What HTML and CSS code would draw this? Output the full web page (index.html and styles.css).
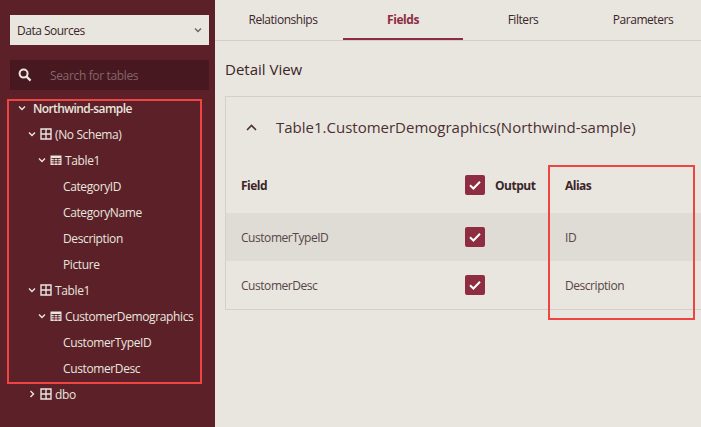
FILE: index.html
```html
<!DOCTYPE html>
<html lang="en">
<head>
<meta charset="utf-8">
<title>Detail View</title>
<link rel="stylesheet" href="styles.css">
</head>
<body>
<svg class="defs" width="0" height="0">
  <defs>
    <symbol id="schema" viewBox="0 0 12 12"><path d="M1 1h10v10H1zM6 1v10M1 6h10" fill="none" stroke="currentColor" stroke-width="1.4"/></symbol>
    <symbol id="table" viewBox="0 0 12 12"><path d="M0.5 1.5h11v9.5h-11z" fill="currentColor"/><path d="M1.5 4.5h9M1.5 6.7h9M1.5 8.9h9M4.2 4v6.5M7.8 4v6.5" stroke="#5c2029" stroke-width="0.9" fill="none"/></symbol>
    <symbol id="down" viewBox="0 0 8 8"><path d="M1 2.5l3 3 3-3" fill="none" stroke="currentColor" stroke-width="1.4"/></symbol>
    <symbol id="right" viewBox="0 0 8 8"><path d="M2.5 1l3 3-3 3" fill="none" stroke="currentColor" stroke-width="1.4"/></symbol>
    <symbol id="check" viewBox="0 0 20 20"><path d="M5 10.3l3.4 3.2 6.6-6.8" fill="none" stroke="#fff" stroke-width="2"/></symbol>
  </defs>
</svg>
<div class="app">
  <aside class="sidebar">
    <div class="select">
      <span>Data Sources</span>
      <svg class="select-caret" width="8" height="8"><use href="#down"/></svg>
    </div>
    <div class="search">
      <svg class="search-icon" width="14" height="14" viewBox="0 0 14 14"><circle cx="5.6" cy="5.6" r="4" fill="none" stroke="currentColor" stroke-width="2"/><path d="M8.6 8.6l4 4" stroke="currentColor" stroke-width="2.2"/></svg>
      <span>Search for tables</span>
    </div>
    <ul class="tree">
      <li class="node level-0 strong"><svg class="caret" width="8" height="8"><use href="#down"/></svg>Northwind-sample</li>
      <li class="node level-1"><svg class="caret" width="8" height="8"><use href="#down"/></svg><svg class="glyph" width="12" height="12"><use href="#schema"/></svg>(No Schema)</li>
      <li class="node level-2"><svg class="caret" width="8" height="8"><use href="#down"/></svg><svg class="glyph" width="12" height="12"><use href="#table"/></svg>Table1</li>
      <li class="node leaf">CategoryID</li>
      <li class="node leaf">CategoryName</li>
      <li class="node leaf">Description</li>
      <li class="node leaf">Picture</li>
      <li class="node level-1"><svg class="caret" width="8" height="8"><use href="#down"/></svg><svg class="glyph" width="12" height="12"><use href="#schema"/></svg>Table1</li>
      <li class="node level-2"><svg class="caret" width="8" height="8"><use href="#down"/></svg><svg class="glyph" width="12" height="12"><use href="#table"/></svg>CustomerDemographics</li>
      <li class="node leaf">CustomerTypeID</li>
      <li class="node leaf">CustomerDesc</li>
      <li class="node level-1"><svg class="caret" width="8" height="8"><use href="#right"/></svg><svg class="glyph" width="12" height="12"><use href="#schema"/></svg>dbo</li>
    </ul>
  </aside>
  <main class="content">
    <nav class="tabs">
      <div class="tab">Relationships</div>
      <div class="tab active">Fields</div>
      <div class="tab">Filters</div>
      <div class="tab">Parameters</div>
    </nav>
    <h1 class="title">Detail View</h1>
    <section class="card">
      <header class="card-head">
        <svg class="card-caret" width="11" height="7" viewBox="0 0 11 7"><path d="M1 6l4.5-4.5L10 6" fill="none" stroke="currentColor" stroke-width="1.6"/></svg>
        <span>Table1.CustomerDemographics(Northwind-sample)</span>
      </header>
      <div class="row head">
        <div class="col-field">Field</div>
        <div class="col-output"><span class="box"><svg width="20" height="20"><use href="#check"/></svg></span><span>Output</span></div>
        <div class="col-alias">Alias</div>
      </div>
      <div class="row shaded">
        <div class="col-field">CustomerTypeID</div>
        <div class="col-output"><span class="box"><svg width="20" height="20"><use href="#check"/></svg></span></div>
        <div class="col-alias">ID</div>
      </div>
      <div class="row">
        <div class="col-field">CustomerDesc</div>
        <div class="col-output"><span class="box"><svg width="20" height="20"><use href="#check"/></svg></span></div>
        <div class="col-alias">Description</div>
      </div>
    </section>
  </main>
</div>
<div class="mark mark-tree"></div>
<div class="mark mark-alias"></div>
</body>
</html>
```

FILE: styles.css
```css
* { box-sizing: border-box; }
html, body { margin: 0; height: 100%; overflow: hidden; }
body {
  font-family: "Open Sans", "Noto Sans", "Liberation Sans", sans-serif;
  font-size: 12px;
  color: #3b2529;
  background: #e9e6df;
  position: relative;
}
.defs { position: absolute; }
.app { display: flex; width: 701px; height: 427px; }

.sidebar {
  width: 215px;
  flex: none;
  background: #5c2029;
  padding: 15px 6px 0 10px;
  color: #e9e6df;
}
.select {
  height: 30px;
  background: #e9e6df;
  color: #3b2529;
  display: flex;
  align-items: center;
  justify-content: space-between;
  padding: 0 7px;
  letter-spacing: -0.5px;
}
.select-caret { color: #6b6462; }
.search {
  height: 30px;
  margin-top: 15px;
  background: #481820;
  display: flex;
  align-items: center;
  padding-left: 8px;
  gap: 18px;
  color: #85666a;
  letter-spacing: -0.35px;
}
.search-icon { color: #e9e6df; }
.tree { list-style: none; margin: 5px 0 0; padding: 0; }
.node {
  height: 26px;
  display: flex;
  align-items: center;
  white-space: nowrap;
  letter-spacing: -0.38px;
}
.strong { font-weight: 600; letter-spacing: -0.6px; }
.caret { flex: none; margin-right: 4px; }
.glyph { flex: none; margin-right: 3px; }
.level-0 { padding-left: 8px; }
.level-0 .caret { margin-right: 7px; }
.level-1 { padding-left: 18px; }
.level-2 { padding-left: 28px; }
.leaf { padding-left: 53px; }

.content { flex: 1; min-width: 0; overflow: hidden; }
.tabs {
  height: 41px;
  display: flex;
  padding-left: 8px;
  border-bottom: 1px solid #d3d0c9;
}
.tab {
  width: 120px;
  flex: none;
  height: 40px;
  line-height: 40px;
  text-align: center;
  letter-spacing: -0.45px;
}
.tab.active {
  color: #8e2c42;
  font-weight: 700;
  border-bottom: 2px solid #8e2c42;
}
.title {
  margin: 17px 0 0 10px;
  font-size: 15px;
  line-height: 22px;
  font-weight: 500;
  letter-spacing: 0;
}
.card {
  margin: 16px -20px 0 10px;
  border: 1px solid #d3d0c9;
  height: 214px;
}
.card-head {
  height: 60px;
  display: flex;
  align-items: center;
  padding-left: 20px;
  gap: 19px;
  font-size: 15px;
  letter-spacing: 0;
  color: #4a3034;
}
.row {
  height: 48px;
  display: flex;
  align-items: center;
  color: #574548;
  letter-spacing: -0.45px;
}
.row.head { height: 56px; font-weight: 700; letter-spacing: -0.5px; color: #3b2529; }
.row.shaded { background: #dfdcd5; }
.col-field { width: 239px; padding-left: 15px; flex: none; }
.col-output { width: 100px; flex: none; display: flex; align-items: center; gap: 10px; }
.box {
  width: 20px;
  height: 20px;
  background: #8e2c42;
  border-radius: 2px;
  display: block;
}
.box svg { display: block; }
.mark {
  position: absolute;
  border: 2px solid #ee4444;
  pointer-events: none;
}
.mark-tree { left: 7px; top: 99px; width: 195px; height: 285px; }
.mark-alias { left: 548px; top: 165px; width: 147px; height: 155px; }
```
